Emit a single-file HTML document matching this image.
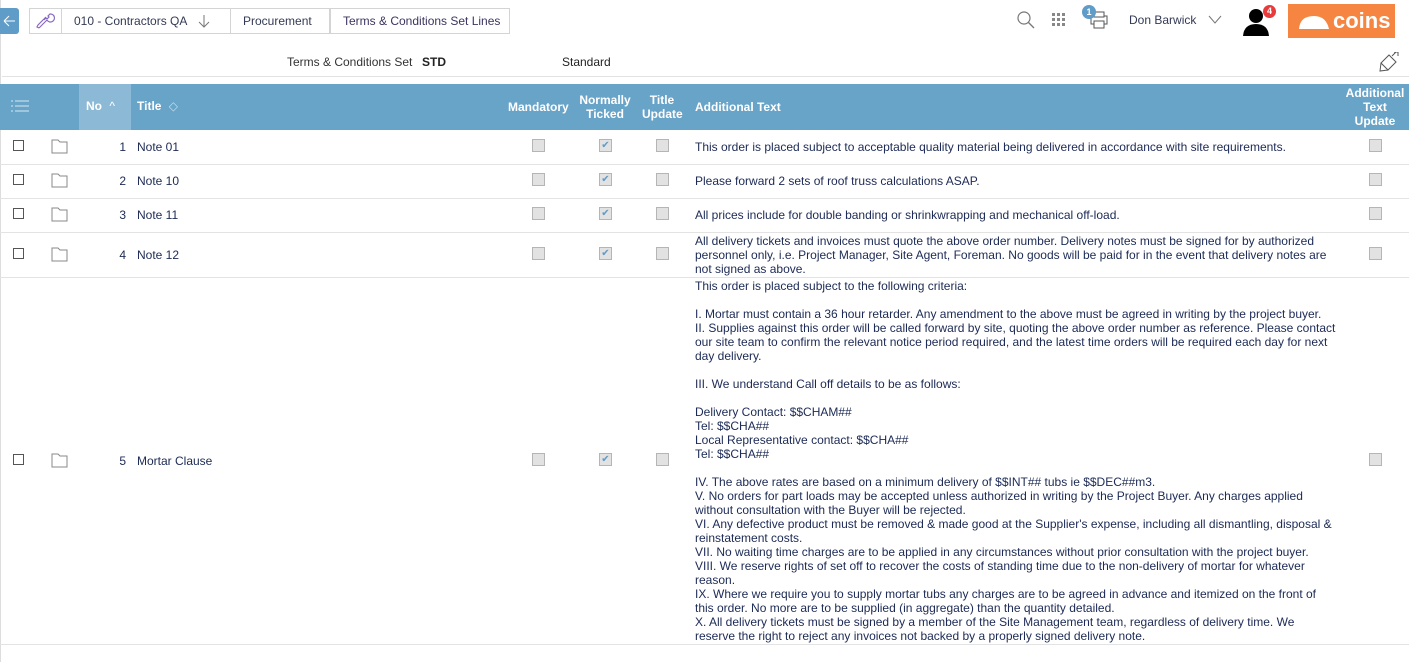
<!DOCTYPE html>
<html><head><style>
*{margin:0;padding:0;box-sizing:border-box}
body{width:1409px;height:662px;overflow:hidden;background:#fff;font-family:"Liberation Sans",sans-serif;font-size:12px;color:#1c2a55;position:relative}
.a{position:absolute}
.crumb{position:absolute;top:8px;height:26px;border:1px solid #d4d4d4;background:#fff;font-size:12px;color:#333a55;line-height:24px;padding-left:12px}
.cb{position:absolute;width:13px;height:13px;border:1px solid #b5b5b5;background:#e2e2e2}
.ck{color:#5f9cc7;font-size:10px;line-height:11px;text-align:center}
.sel{position:absolute;width:11px;height:11px;border:1px solid #555;background:#fff;left:13px}
.fold{position:absolute;left:51px;width:17px;height:15px}
.row{position:absolute;left:0;width:1409px;border-bottom:1px solid #e3e3e3}
.num{position:absolute;width:40px;left:86px;text-align:right}
.ttl{position:absolute;left:137px}
.txt{position:absolute;left:695px;width:642px;line-height:14px}
.th{position:absolute;color:#fff;text-align:center;line-height:14px;font-size:12px}
</style></head><body>
<div class="a" style="left:0;top:0;width:1px;height:662px;background:#ddd"></div>
<div class="a" style="left:0;top:8px;width:19px;height:26px;background:#5f9cc7;border-radius:0 3px 3px 0"><svg width="19" height="26"><path d="M4 13h11M4 13l5-5M4 13l5 5" fill="none" stroke="#fff" stroke-width="1"/></svg></div>
<div class="crumb" style="left:29px;width:36px;padding-left:0">
<svg width="34" height="24" viewBox="0 0 34 24"><path d="M9 19 L17 11 M17 11 a4 4 0 1 0 3 -6 l-2 2 1 1 -2 2 -1 -1 -2 2 M9 19 l-2 -1 1 -2 8 -8" fill="none" stroke="#8a6ac0" stroke-width="1.2"/></svg></div>
<div class="crumb" style="left:61px;width:170px">010 - Contractors QA <svg style="margin-left:8px;vertical-align:-3px" width="12" height="14"><path d="M6 1v12M1 8l5 5 5-5" fill="none" stroke="#777"/></svg></div>
<div class="crumb" style="left:230px;width:100px">Procurement</div>
<div class="crumb" style="left:330px;width:180px;color:#3c3560">Terms &amp; Conditions Set Lines</div>
<svg class="a" style="left:1016px;top:10px" width="20" height="20"><circle cx="8" cy="8" r="6" fill="none" stroke="#777" stroke-width="1.2"/><path d="M12.5 12.5 L18 18" stroke="#777" stroke-width="1.3"/></svg>
<svg class="a" style="left:1052px;top:13px" width="16" height="16"><g fill="#888"><rect x="0" y="0" width="3" height="3"/><rect x="5" y="0" width="3" height="3"/><rect x="10" y="0" width="3" height="3"/><rect x="0" y="5" width="3" height="3"/><rect x="5" y="5" width="3" height="3"/><rect x="10" y="5" width="3" height="3"/><rect x="0" y="10" width="3" height="3"/><rect x="5" y="10" width="3" height="3"/><rect x="10" y="10" width="3" height="3"/></g></svg>
<svg class="a" style="left:1088px;top:10px" width="22" height="20"><rect x="3" y="6" width="16" height="8" fill="none" stroke="#555"/><rect x="6" y="2" width="10" height="5" fill="#fff" stroke="#555"/><rect x="6" y="11" width="10" height="7" fill="#fff" stroke="#555"/></svg>
<div class="a" style="left:1082px;top:5px;width:14px;height:14px;border-radius:7px;background:#5f9cc7;color:#fff;font-size:9px;font-weight:bold;text-align:center;line-height:14px">1</div>
<div class="a" style="left:1129px;top:13px;color:#333a55">Don Barwick</div>
<svg class="a" style="left:1208px;top:15px" width="14" height="10"><path d="M1 1 L7 8 L13 1" fill="none" stroke="#777"/></svg>
<svg class="a" style="left:1242px;top:6px" width="30" height="30"><circle cx="14" cy="10" r="7" fill="#000"/><path d="M1 30 Q2 18 14 18 Q26 18 27 30 Z" fill="#000"/></svg>
<div class="a" style="left:1263px;top:5px;width:13px;height:13px;border-radius:7px;background:#e83b3b;color:#fff;font-size:9px;font-weight:bold;text-align:center;line-height:13px">4</div>
<div class="a" style="left:1288px;top:4px;width:107px;height:34px;background:#f58540;overflow:hidden"></div>
<div class="a" style="left:1333px;top:4px;color:#fff;font-size:22px;font-weight:bold;line-height:34px">coins</div>
<svg class="a" style="left:1298px;top:13px" width="36" height="18"><path d="M1 16 Q2 3 16 3 Q28 3 31 16 Z" fill="#fff"/></svg>
<div class="a" style="left:287px;top:55px;color:#333">Terms &amp; Conditions Set</div>
<div class="a" style="left:422px;top:55px;font-weight:bold;color:#222">STD</div>
<div class="a" style="left:562px;top:55px;color:#222">Standard</div>
<svg class="a" style="left:1378px;top:52px" width="22" height="20"><path d="M3 11 L10 18 L18 10 L11 3 Z M3 11 L2 19 L10 18" fill="none" stroke="#555"/><path d="M14 4 L19 -1 M16 0 L20 0 L20 4" fill="none" stroke="#555"/></svg>
<div class="a" style="left:2px;top:76px;width:1407px;height:1px;background:#e2e2e2"></div>
<div class="a" style="left:0;top:84px;width:1409px;height:46px;background:#68a3c8"></div>
<div class="a" style="left:79px;top:84px;width:52px;height:46px;background:#8cb9d6"></div>
<svg class="a" style="left:11px;top:100px" width="18" height="12"><g stroke="#d8e8f3"><path d="M0 1h2M4 1h14M0 6h2M4 6h14M0 11h2M4 11h14"/></g></svg>
<div class="th" style="left:86px;top:99px;font-weight:bold">No <span style="font-weight:normal;margin-left:4px">^</span></div>
<div class="th" style="left:137px;top:99px;font-weight:bold">Title <span style="font-weight:normal;margin-left:4px;color:#cde">◇</span></div>
<div class="th" style="left:508px;top:100px;font-weight:bold">Mandatory</div>
<div class="th" style="left:576px;top:93px;width:58px;font-weight:bold">Normally<br>Ticked</div>
<div class="th" style="left:642px;top:93px;width:40px;font-weight:bold">Title<br>Update</div>
<div class="th" style="left:695px;top:100px;font-weight:bold">Additional Text</div>
<div class="th" style="left:1342px;top:86px;width:66px;font-weight:bold">Additional<br>Text<br>Update</div>

<div class="row" style="top:130px;height:35px"></div>
<div class="row" style="top:164px;height:35px"></div>
<div class="row" style="top:198px;height:35px"></div>
<div class="row" style="top:232px;height:46px"></div>
<div class="row" style="top:277px;height:368px"></div>

<div class="sel" style="top:140px"></div><svg class="fold" style="top:139px"><path d="M1 1h6l2 2h7v11H1z" fill="none" stroke="#888"/></svg><div class="num" style="top:140px">1</div><div class="ttl" style="top:140px">Note 01</div>
<div class="cb" style="left:532px;top:139px"></div><div class="cb ck" style="left:599px;top:139px">✔</div><div class="cb" style="left:656px;top:139px"></div><div class="cb" style="left:1369px;top:139px"></div>
<div class="txt" style="top:140px">This order is placed subject to acceptable quality material being delivered in accordance with site requirements.</div>

<div class="sel" style="top:174px"></div><svg class="fold" style="top:173px"><path d="M1 1h6l2 2h7v11H1z" fill="none" stroke="#888"/></svg><div class="num" style="top:174px">2</div><div class="ttl" style="top:174px">Note 10</div>
<div class="cb" style="left:532px;top:173px"></div><div class="cb ck" style="left:599px;top:173px">✔</div><div class="cb" style="left:656px;top:173px"></div><div class="cb" style="left:1369px;top:173px"></div>
<div class="txt" style="top:174px">Please forward 2 sets of roof truss calculations ASAP.</div>

<div class="sel" style="top:208px"></div><svg class="fold" style="top:207px"><path d="M1 1h6l2 2h7v11H1z" fill="none" stroke="#888"/></svg><div class="num" style="top:208px">3</div><div class="ttl" style="top:208px">Note 11</div>
<div class="cb" style="left:532px;top:207px"></div><div class="cb ck" style="left:599px;top:207px">✔</div><div class="cb" style="left:656px;top:207px"></div><div class="cb" style="left:1369px;top:207px"></div>
<div class="txt" style="top:208px">All prices include for double banding or shrinkwrapping and mechanical off-load.</div>

<div class="sel" style="top:248px"></div><svg class="fold" style="top:247px"><path d="M1 1h6l2 2h7v11H1z" fill="none" stroke="#888"/></svg><div class="num" style="top:248px">4</div><div class="ttl" style="top:248px">Note 12</div>
<div class="cb" style="left:532px;top:247px"></div><div class="cb ck" style="left:599px;top:247px">✔</div><div class="cb" style="left:656px;top:247px"></div><div class="cb" style="left:1369px;top:247px"></div>
<div class="txt" style="top:234px">All delivery tickets and invoices must quote the above order number. Delivery notes must be signed for by authorized personnel only, i.e. Project Manager, Site Agent, Foreman. No goods will be paid for in the event that delivery notes are not signed as above.</div>

<div class="sel" style="top:454px"></div><svg class="fold" style="top:453px"><path d="M1 1h6l2 2h7v11H1z" fill="none" stroke="#888"/></svg><div class="num" style="top:454px">5</div><div class="ttl" style="top:454px">Mortar Clause</div>
<div class="cb" style="left:532px;top:453px"></div><div class="cb ck" style="left:599px;top:453px">✔</div><div class="cb" style="left:656px;top:453px"></div><div class="cb" style="left:1369px;top:453px"></div>
<div class="txt" style="top:279px">This order is placed subject to the following criteria:<br><br>I. Mortar must contain a 36 hour retarder. Any amendment to the above must be agreed in writing by the project buyer.<br>II. Supplies against this order will be called forward by site, quoting the above order number as reference. Please contact our site team to confirm the relevant notice period required, and the latest time orders will be required each day for next day delivery.<br><br>III. We understand Call off details to be as follows:<br><br>Delivery Contact: $$CHAM##<br>Tel: $$CHA##<br>Local Representative contact: $$CHA##<br>Tel: $$CHA##<br><br>IV. The above rates are based on a minimum delivery of $$INT## tubs ie $$DEC##m3.<br>V. No orders for part loads may be accepted unless authorized in writing by the Project Buyer. Any charges applied without consultation with the Buyer will be rejected.<br>VI. Any defective product must be removed &amp; made good at the Supplier's expense, including all dismantling, disposal &amp; reinstatement costs.<br>VII. No waiting time charges are to be applied in any circumstances without prior consultation with the project buyer.<br>VIII. We reserve rights of set off to recover the costs of standing time due to the non-delivery of mortar for whatever reason.<br>IX. Where we require you to supply mortar tubs any charges are to be agreed in advance and itemized on the front of this order. No more are to be supplied (in aggregate) than the quantity detailed.<br>X. All delivery tickets must be signed by a member of the Site Management team, regardless of delivery time. We reserve the right to reject any invoices not backed by a properly signed delivery note.</div>
</body></html>
